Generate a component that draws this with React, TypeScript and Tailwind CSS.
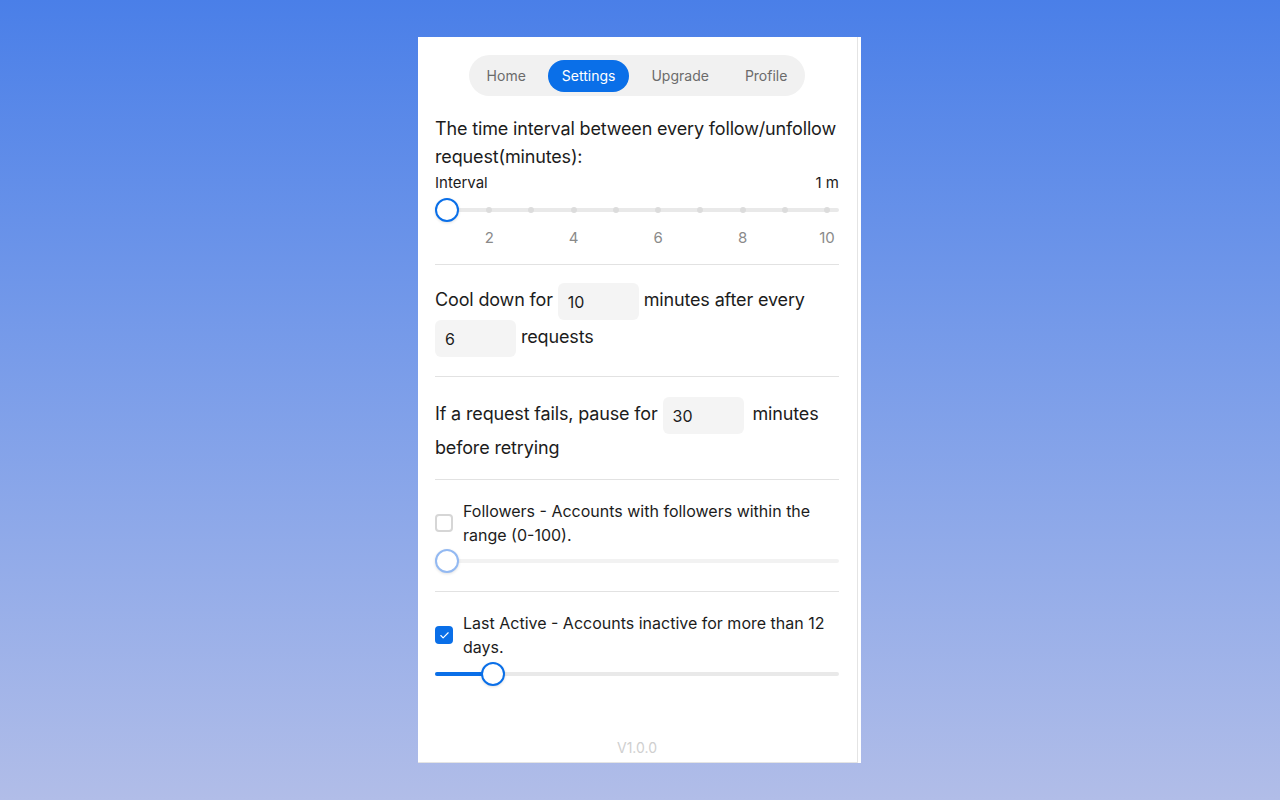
import React from 'react';
import { Check } from 'lucide-react';

const tabs = ['Home', 'Settings', 'Upgrade', 'Profile'];
const marks = [2, 3, 4, 5, 6, 7, 8, 9, 10];

// value slider built from divs so the track and thumb can match exactly
const Slider: React.FC<{ percent: number; disabled?: boolean; ticks?: boolean }> = ({ percent, disabled, ticks }) => (
    <div className="relative h-6">
        <div className={`absolute left-0 right-0 top-[10px] h-1 rounded-full ${disabled ? 'bg-[#f2f2f2]' : 'bg-[#e9e9e9]'}`} />
        <div className="absolute left-3 right-3 top-0 h-6">
            {!disabled && percent > 0 && (
                <div className="absolute -left-3 top-[10px] h-1 rounded-full bg-[#0a6fe8]" style={{ width: `calc(${percent}% + 12px)` }} />
            )}
            {ticks &&
                marks.map((m) => (
                    <div
                        key={m}
                        className="absolute top-[9px] w-[6px] h-[6px] -ml-[3px] rounded-full bg-[#dcdcdc]"
                        style={{ left: `${((m - 1) / 9) * 100}%` }}
                    />
                ))}
            <div
                className={`absolute top-0 w-6 h-6 -ml-3 rounded-full bg-white border-[2.5px] shadow-[0_1px_3px_rgba(0,0,0,0.12)] ${disabled ? 'border-[#93b9f2]' : 'border-[#0a6fe8]'}`}
                style={{ left: `${percent}%` }}
            />
        </div>
    </div>
);

const NumBox: React.FC<{ value: string; className?: string }> = ({ value, className = '' }) => (
    <span className={`inline-flex items-center align-middle w-[81px] h-[37px] px-[10px] rounded-md bg-[#f4f4f4] text-[16px] tracking-normal text-[#1c1c1c] ${className}`}>
        {value}
    </span>
);

const App: React.FC = () => {
    return (
        <div
            className="min-h-[800px] w-full flex justify-center pt-[37px] pr-px bg-gradient-to-b from-[#4a7fe8] to-[#b1bde8]"
            style={{ fontFamily: 'Inter, "Liberation Sans", Arial, sans-serif' }}
        >
            <div className="w-[443px] h-[726px] bg-white pr-[3px]">
                <div className="h-full flex flex-col border-r border-b border-[#e4e4e4] pl-[17px] pr-[18px]">
                    {/* tabs */}
                    <div className="flex justify-center pt-[18px]">
                        <div className="flex items-center gap-2 h-[41px] px-1 rounded-full bg-[#f1f1f1]">
                            {tabs.map((t) => (
                                <div
                                    key={t}
                                    className={`h-8 px-[14px] flex items-center rounded-full text-[14px] ${t === 'Settings' ? 'bg-[#0a6fe8] text-white' : 'text-[#6b6b6b]'}`}
                                >
                                    {t}
                                </div>
                            ))}
                        </div>
                    </div>

                    {/* interval */}
                    <div className="pt-[19px] pb-[13px] border-b border-[#e2e2e2]">
                        <p className="text-[18px] leading-[28px] tracking-[-0.15px] text-[#1c1c1c]">
                            The time interval between every follow/unfollow request(minutes):
                        </p>
                        <div className="flex justify-between text-[15px] leading-[22px] text-[#1c1c1c] mt-px">
                            <span>Interval</span>
                            <span>1 m</span>
                        </div>
                        <div className="mt-[4px]">
                            <Slider percent={0} ticks />
                        </div>
                        <div className="relative h-6 mx-3 mt-[5px] text-[15px] text-[#8a8a8a]">
                            {[2, 4, 6, 8, 10].map((n) => (
                                <span
                                    key={n}
                                    className="absolute top-0 -translate-x-1/2"
                                    style={{ left: `${((n - 1) / 9) * 100}%` }}
                                >
                                    {n}
                                </span>
                            ))}
                        </div>
                    </div>

                    {/* cool down */}
                    <div className="pt-[18px] pb-[19px] border-b border-[#e2e2e2]">
                        <p className="text-[18px] leading-[28px] tracking-[-0.15px] text-[#1c1c1c]">
                            Cool down for <NumBox value="10" /> minutes after every <NumBox value="6" /> requests
                        </p>
                    </div>

                    {/* retry */}
                    <div className="pt-[20px] pb-[17px] border-b border-[#e2e2e2]">
                        <p className="text-[18px] leading-[28px] tracking-[-0.15px] text-[#1c1c1c]">
                            If a request fails, pause for <NumBox value="30" className="mr-[4px]" /> minutes before retrying
                        </p>
                    </div>

                    {/* followers filter */}
                    <div className="pt-[19px] pb-[18px] border-b border-[#e2e2e2]">
                        <div className="flex items-center gap-[10px]">
                            <span className="shrink-0 w-[18px] h-[18px] rounded-[4px] border-2 border-[#d6d6d6] bg-white" />
                            <span className="text-[16px] leading-[24px] text-[#1c1c1c]">
                                Followers - Accounts with followers within the range (0-100).
                            </span>
                        </div>
                        <div className="mt-[2px]">
                            <Slider percent={0} disabled />
                        </div>
                    </div>

                    {/* last active filter */}
                    <div className="pt-[19px]">
                        <div className="flex items-center gap-[10px]">
                            <span className="shrink-0 w-[18px] h-[18px] rounded-[4px] bg-[#0a6fe8] flex items-center justify-center">
                                <Check size={11} strokeWidth={2.5} className="text-white" />
                            </span>
                            <span className="text-[16px] leading-[24px] text-[#1c1c1c]">
                                Last Active - Accounts inactive for more than 12 days.
                            </span>
                        </div>
                        <div className="mt-[3px]">
                            <Slider percent={12} />
                        </div>
                    </div>

                    <div className="mt-auto pb-[4px] text-center text-[14px] text-[#cfcfcf]">V1.0.0</div>
                </div>
            </div>
        </div>
    );
};

export default App;
